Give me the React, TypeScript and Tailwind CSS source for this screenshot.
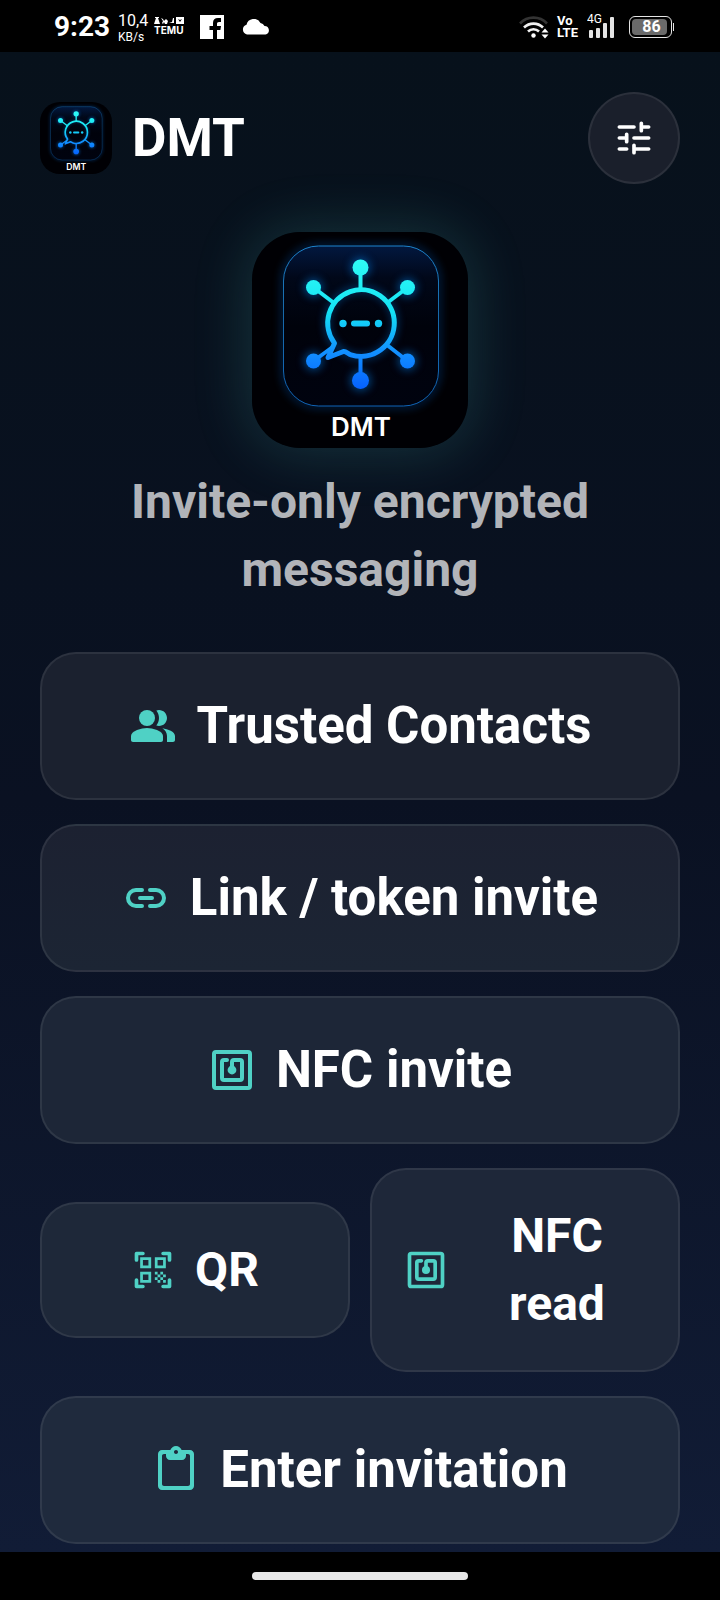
import type { ReactNode } from "react";

type IconProps = { className?: string };

const PeopleIcon = ({ className }: IconProps) => (
  <svg viewBox="0 0 24 24" fill="currentColor" className={className} aria-hidden="true">
    <circle cx="9" cy="8" r="4" />
    <path d="M9 13c-2.67 0-8 1.34-8 4v2c0 .55.45 1 1 1h14c.55 0 1-.45 1-1v-2c0-2.66-5.33-4-8-4z" />
    <path d="M15 12c2.21 0 4-1.79 4-4s-1.79-4-4-4c-.47 0-.91.1-1.33.24C14.5 5.27 15 6.58 15 8s-.5 2.73-1.33 3.76c.42.14.86.24 1.33.24z" />
    <path d="M16.67 13.13C18.04 14.06 19 15.32 19 17v3h3c.55 0 1-.45 1-1v-2c0-2.18-3.57-3.47-6.33-3.87z" />
  </svg>
);

const LinkIcon = ({ className }: IconProps) => (
  <svg viewBox="0 0 24 24" fill="none" stroke="currentColor" strokeWidth="2" strokeLinecap="round" className={className} aria-hidden="true">
    <path d="M10 8H7a4 4 0 0 0 0 8h3M14 8h3a4 4 0 0 1 0 8h-3M9 12h6" />
  </svg>
);

const NfcIcon = ({ className }: IconProps) => (
  <svg viewBox="0 0 24 24" fill="none" stroke="currentColor" strokeWidth="2" strokeLinecap="round" className={className} aria-hidden="true">
    <rect x="3" y="3" width="18" height="18" rx="1" />
    <path d="M9.5 7H8a1 1 0 0 0-1 1v8a1 1 0 0 0 1 1h8a1 1 0 0 0 1-1V8a1 1 0 0 0-1-1h-3a1 1 0 0 0-1 1v4" />
    <circle cx="12" cy="12" r="2.2" fill="currentColor" stroke="none" />
  </svg>
);

const QrIcon = ({ className }: IconProps) => (
  <svg viewBox="0 0 24 24" fill="currentColor" className={className} aria-hidden="true">
    <path d="M6.5 3H3v3.5M17.5 3H21v3.5M3 17.5V21h3.5M21 17.5V21h-3.5" fill="none" stroke="currentColor" strokeWidth="2" strokeLinecap="round" strokeLinejoin="round" />
    <path d="M9.5 6.5v3h-3v-3h3M11 5H5v6h6V5zm-1.5 9.5v3h-3v-3h3M11 13H5v6h6v-6zm6.5-6.5v3h-3v-3h3M19 5h-6v6h6V5zm-6 8h1.5v1.5H13V13zm1.5 1.5H16V16h-1.5v-1.5zM16 13h1.5v1.5H16V13zm-3 3h1.5v1.5H13V16zm1.5 1.5H16V19h-1.5v-1.5zM16 16h1.5v1.5H16V16zm1.5-1.5H19V16h-1.5v-1.5zm0 3H19V19h-1.5v-1.5z" />
  </svg>
);

const PasteIcon = ({ className }: IconProps) => (
  <svg viewBox="0 0 24 24" fill="currentColor" className={className} aria-hidden="true">
    <path d="M19 2h-4.18C14.4.84 13.3 0 12 0c-1.3 0-2.4.84-2.82 2H5c-1.1 0-2 .9-2 2v16c0 1.1.9 2 2 2h14c1.1 0 2-.9 2-2V4c0-1.1-.9-2-2-2zm-7 0c.55 0 1 .45 1 1s-.45 1-1 1-1-.45-1-1 .45-1 1-1zm6 18H6c-.55 0-1-.45-1-1V5c0-.55.45-1 1-1h1v1c0 1.1.9 2 2 2h6c1.1 0 2-.9 2-2V4h1c.55 0 1 .45 1 1v14c0 .55-.45 1-1 1z" />
  </svg>
);

const TuneIcon = ({ className }: IconProps) => (
  <svg viewBox="0 0 24 24" fill="none" stroke="currentColor" strokeWidth="2" strokeLinecap="round" className={className} aria-hidden="true">
    <path d="M4 6h8M16 4v4M16 6h4M4 12h4M8 10v4M12 12h8M4 18h4M12 16v4M12 18h8" />
  </svg>
);

const NODES = [
  { x: 108.5, y: 35.5, r: 8, x2: 108.5, y2: 58 },
  { x: 61.5, y: 55.5, r: 7.5, x2: 82, y2: 71 },
  { x: 155.5, y: 55.5, r: 7.5, x2: 135, y2: 71 },
  { x: 61.5, y: 129, r: 7.5, x2: 80, y2: 115.5 },
  { x: 155.5, y: 129, r: 7.5, x2: 135, y2: 113 },
  { x: 108.5, y: 148.5, r: 8.5, x2: 108.5, y2: 123 },
];

// App logo, drawn on a 216 unit square
const Logo = ({ id, className }: { id: string; className?: string }) => (
  <svg viewBox="0 0 216 216" className={className} role="img" aria-label="DMT logo">
    <defs>
      <linearGradient id={`${id}-ink`} gradientUnits="userSpaceOnUse" x1="0" y1="28" x2="0" y2="158">
        <stop offset="0" stopColor="#2ffbf5" />
        <stop offset="0.4" stopColor="#14e2f5" />
        <stop offset="0.7" stopColor="#1291ff" />
        <stop offset="1" stopColor="#0560ff" />
      </linearGradient>
      <linearGradient id={`${id}-frame`} x1="0" y1="0" x2="0" y2="1">
        <stop offset="0" stopColor="#1c83cc" />
        <stop offset="0.4" stopColor="#176aab" />
        <stop offset="1" stopColor="#0f63b5" />
      </linearGradient>
      <linearGradient id={`${id}-panel`} x1="0" y1="0" x2="0" y2="1">
        <stop offset="0" stopColor="#02183f" />
        <stop offset="0.2" stopColor="#010819" />
        <stop offset="0.5" stopColor="#00020b" />
        <stop offset="1" stopColor="#00030f" />
      </linearGradient>
      <filter id={`${id}-glow`} x="-30%" y="-30%" width="160%" height="160%">
        <feGaussianBlur stdDeviation="4" />
      </filter>
    </defs>
    <rect width="216" height="216" fill="#000004" />
    <rect x="31.5" y="14" width="155" height="160" rx="35" fill="none" stroke="#064a9a" strokeWidth="5" opacity="0.5" filter={`url(#${id}-glow)`} />
    <rect x="31.5" y="14" width="155" height="160" rx="35" fill={`url(#${id}-panel)`} stroke={`url(#${id}-frame)`} />
    <g filter={`url(#${id}-glow)`} fill="#0475d8" opacity="0.55">
      {NODES.map((n) => (
        <circle key={`${n.x}-${n.y}`} cx={n.x} cy={n.y} r={n.r + 2} />
      ))}
      <circle cx="109" cy="91" r="34" fill="none" stroke="#0475d8" strokeWidth="5" />
    </g>
    <path
      d="M91.5 119.5L76 125.5L82.5 111.2A33.3 33.3 0 1 1 99 122.8C96 122 94 119 91.5 119.5Z"
      fill="none"
      stroke={`url(#${id}-ink)`}
      strokeWidth="5"
      strokeLinejoin="round"
    />
    <g fill={`url(#${id}-ink)`}>
      {NODES.map((n) => (
        <g key={`${n.x}-${n.y}`}>
          <path d={`M${n.x} ${n.y}L${n.x2} ${n.y2}`} stroke={`url(#${id}-ink)`} strokeWidth="4" />
          <circle cx={n.x} cy={n.y} r={n.r} />
        </g>
      ))}
      <circle cx="91" cy="91.5" r="3.7" />
      <rect x="99" y="88.5" width="19" height="6" rx="3" />
      <circle cx="126.5" cy="91.5" r="3.7" />
    </g>
    <text x="109" y="204" textAnchor="middle" fill="#fff" fontFamily="Inter, sans-serif" fontSize="26" fontWeight="600">
      DMT
    </text>
  </svg>
);

const StatusBar = () => (
  <div className="flex h-[52px] items-center justify-between bg-black pt-px pr-[46px] pl-[54px] text-white">
    <div className="flex items-center">
      <span className="text-[28px] leading-8 font-bold">9:23</span>
      <div className="ml-2 flex w-8 flex-col pt-1">
        <span className="text-base leading-4">10,4</span>
        <span className="text-xs leading-4">KB/s</span>
      </div>
      <div className="ml-1 flex w-8 flex-col items-start">
        <svg viewBox="0 0 30 7" className="h-[7px] w-[30px]" fill="#fff" aria-hidden="true">
          <path d="M1 0h4v1H4l1 3 1 3H0l1-3 1-3H1zM7 1l2 1 1 2 2-2 2 2-1 3h-2l-1-2-1 2-1-1 1-2zM15 6l3-1 1-4h1v5zM22 0h8v7h-8zm2 2 2 3 2-3-2 1z" fillRule="evenodd" />
        </svg>
        <span className="font-[Inter] text-[10px] leading-3 font-bold">TEMU</span>
      </div>
      <svg viewBox="0 0 24 24" className="ml-[14px] size-6" aria-hidden="true">
        <path fill="#fff" d="M0 0h24v24H0z" />
        <path fill="#000" d="M13 24v-9H9.5v-4H13V8c0-3.2 1.800-5 5-5h3v4h-2c-1.500 0-2 .7-2 2v2h4l-.6 4H17v9z" />
      </svg>
      <svg viewBox="0 0 28 16" className="ml-[18px] h-4 w-7" fill="#fff" aria-hidden="true">
        <path d="M5 15.5a5 5 0 0 1-.5-9.7A7.5 7.5 0 0 1 18.5 4a5.500 5.500 0 0 1 4 3A4.300 4.300 0 0 1 23.500 15.500z" />
      </svg>
    </div>

    <div className="flex items-center">
      <svg viewBox="0 0 30 24" className="h-6 w-[30px]" fill="none" strokeWidth="2.6" aria-hidden="true">
        <path d="M1 8.5a18.5 18.5 0 0 1 27 0" stroke="#333" />
        <path d="M5 12.5a13.5 13.5 0 0 1 19 0M9 16.5a8 8 0 0 1 11 0" stroke="#f0f0f0" />
        <circle cx="14.5" cy="20.5" r="2.2" fill="#fff" />
        <path d="M22.5 17.5l3.500-4 3.500 4zM22.5 19.5l3.500 4 3.500-4z" fill="#fff" />
      </svg>
      <div className="ml-2 flex w-6 flex-col text-[13px] leading-3 font-bold">
        <span>Vo</span>
        <span>LTE</span>
      </div>
      <svg viewBox="0 0 30 28" className="ml-[6px] h-7 w-[30px]" fill="#e4e4e4" aria-hidden="true">
        <text x="0" y="10" fontSize="12" fontFamily="Roboto, sans-serif" fill="#fff">
          4G
        </text>
        <rect x="2" y="17" width="4" height="8" rx="1" />
        <rect x="9" y="15" width="4" height="10" rx="1" />
        <rect x="16" y="10" width="4" height="15" rx="1" />
        <rect x="23" y="4" width="4" height="21" rx="1" />
      </svg>
      <div className="ml-3 flex items-center gap-px">
        <div className="flex h-[22px] w-[43px] rounded-md border border-[#e4e4e4] p-[2px]">
          <span className="flex w-[35px] items-center justify-center rounded-sm bg-[#6a6a6a] pl-1 text-base font-bold">86</span>
        </div>
        <div className="h-2 w-px bg-[#e4e4e4]" />
      </div>
    </div>
  </div>
);

type ActionButtonProps = {
  icon: ReactNode;
  children: ReactNode;
  tone: string;
  compact?: boolean;
};

const ActionButton = ({ icon, children, tone, compact }: ActionButtonProps) => {
  const size = compact
    ? "flex-1 py-8 text-5xl/[68px]"
    : "w-full py-[38px] text-[51px]/[68px]";

  return (
    <button
      type="button"
      className={`flex items-center justify-center gap-5 rounded-[36px] border-2 border-white/8 px-8 font-bold ${tone} ${size}`}
    >
      <span className="shrink-0 text-[#4fd1c5]">{icon}</span>
      <span>{children}</span>
    </button>
  );
};

export default function App() {
  return (
    <div className="flex min-h-screen flex-col bg-black font-[Roboto,sans-serif] text-white">
      <StatusBar />

      <main className="flex grow flex-col bg-linear-to-b from-[#07111b] via-[#0a1122] to-[#111c36] px-10 pt-10 pb-2">
        {/* Header */}
        <header className="flex items-center justify-between">
          <div className="flex items-center gap-5">
            <Logo id="brand" className="size-[72px] rounded-[20px]" />
            <h1 className="text-[53px]/[68px] font-bold">DMT</h1>
          </div>
          <button
            type="button"
            aria-label="Settings"
            className="flex size-[92px] items-center justify-center rounded-full border-2 border-white/8 bg-[#1a1f2b]"
          >
            <TuneIcon className="size-11" />
          </button>
        </header>

        {/* Hero */}
        <section className="mt-12 flex flex-col items-center">
          <Logo id="hero" className="size-[216px] rounded-[48px] shadow-[0_0_56px_4px_rgba(79,209,197,0.18)]" />
          <p className="mt-5 text-center text-5xl/[68px] font-bold text-white/70">
            Invite-only encrypted
            <br />
            messaging
          </p>
        </section>

        {/* Actions */}
        <div className="mt-12 flex flex-col gap-6">
          <ActionButton tone="bg-[#1b212f]" icon={<PeopleIcon className="size-12" />}>
            Trusted Contacts
          </ActionButton>
          <ActionButton tone="bg-linear-to-b from-[#1c2131] to-[#1c2534]" icon={<LinkIcon className="size-12" />}>
            Link / token invite
          </ActionButton>
          <ActionButton tone="bg-[#1d2637]" icon={<NfcIcon className="size-12" />}>
            NFC invite
          </ActionButton>
          <div className="flex items-center gap-5">
            <ActionButton compact tone="bg-[#1e2839]" icon={<QrIcon className="size-11" />}>
              QR
            </ActionButton>
            <ActionButton compact tone="bg-[#1e2739]" icon={<NfcIcon className="size-11" />}>
              NFC read
            </ActionButton>
          </div>
          <ActionButton tone="bg-[#1f2a3d]" icon={<PasteIcon className="size-12" />}>
            Enter invitation
          </ActionButton>
        </div>
      </main>

      {/* Gesture bar */}
      <div className="flex h-12 items-center justify-center bg-black">
        <div className="h-2 w-[216px] rounded-full bg-[#e8e8e8]" />
      </div>
    </div>
  );
}
